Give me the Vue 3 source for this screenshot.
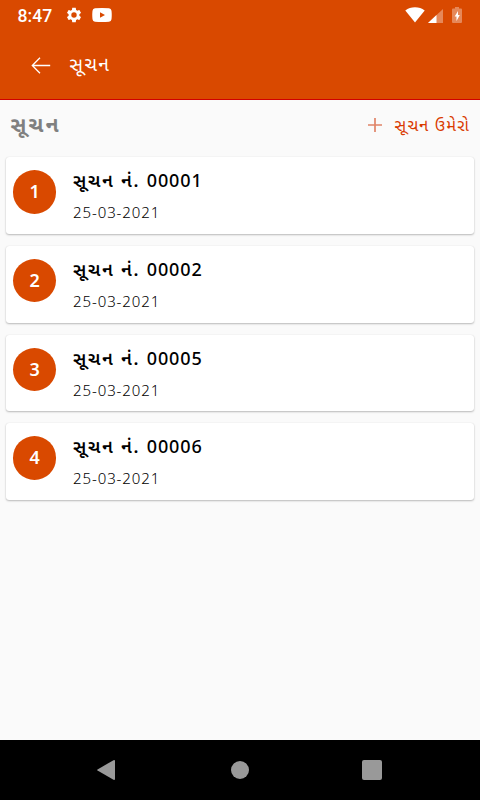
<script setup>
import { ref } from 'vue'

const title = 'સૂચન'
const suggestions = ref([
  { number: '00001', date: '25-03-2021' },
  { number: '00002', date: '25-03-2021' },
  { number: '00005', date: '25-03-2021' },
  { number: '00006', date: '25-03-2021' },
])
</script>

<template>
<div class="screen">
  <header class="header">
    <div class="status">
      <span class="clock">8:47</span>
      <svg class="gear" width="18" height="18" viewBox="0 0 24 24">
        <path fill="#fff" d="M19.14 12.94c.04-.3.06-.61.06-.94s-.02-.64-.07-.94l2.03-1.58c.18-.14.23-.41.12-.61l-1.92-3.32c-.12-.22-.37-.29-.59-.22l-2.39.96c-.5-.38-1.03-.7-1.62-.94L14.4 2.81c-.04-.24-.24-.41-.48-.41h-3.84c-.24 0-.43.17-.47.41l-.36 2.54c-.59.24-1.13.57-1.62.94l-2.39-.96c-.22-.08-.47 0-.59.22L2.74 8.87c-.12.21-.08.47.12.61l2.03 1.58c-.05.3-.09.63-.09.94s.02.64.07.94l-2.03 1.58c-.18.14-.23.41-.12.61l1.92 3.32c.12.22.37.29.59.22l2.39-.96c.5.38 1.03.7 1.62.94l.36 2.54c.05.24.24.41.48.41h3.84c.24 0 .44-.17.47-.41l.36-2.54c.59-.24 1.13-.56 1.62-.94l2.39.96c.22.08.47 0 .59-.22l1.92-3.32c.12-.22.07-.47-.12-.61l-2.01-1.58zM12 15.6A3.6 3.6 0 1 1 12 8.4a3.6 3.6 0 0 1 0 7.2z" />
      </svg>
      <svg class="video" width="20" height="14" viewBox="0 0 20 14">
        <path fill="#fff" fill-rule="evenodd" d="M3 .3Q10-.3 17 .3Q19.2.5 19.5 2.8Q20 7 19.5 11.2Q19.2 13.5 17 13.7Q10 14.3 3 13.7Q.8 13.5.5 11.2Q0 7 .5 2.8Q.8.5 3 .3ZM8 4.2V9.8L13 7Z" />
      </svg>
      <svg class="wifi" width="20" height="16" viewBox="0 0 20 16">
        <path fill="#fff" d="M10 15.6L.3 3.4Q4.500 .3 10 .3T19.700 3.400Z" />
      </svg>
      <svg class="signal" width="15" height="14" viewBox="0 0 15 14">
        <path fill="#fff" fill-opacity=".35" d="M15 0V14H0Z" />
        <path fill="#fff" d="M8.500 6V14H0Z" />
      </svg>
      <svg class="battery" width="10" height="16" viewBox="0 0 10 16">
        <path fill="#fff" fill-opacity=".35" d="M3 0H7V1.500H9Q10 1.500 10 2.500V15Q10 16 9 16H1Q0 16 0 15V2.500Q0 1.500 1 1.500H3Z" />
        <path fill="#fff" d="M6 4L2.700 9.500H4.500V14L7.800 8H6Z" />
      </svg>
    </div>
    <div class="toolbar">
      <svg width="20" height="17" viewBox="0 0 20 17">
        <path fill="none" stroke="#fff" stroke-width="1.300" d="M19.200 8.500H1.500M9 .8L1.300 8.500L9 16.200" />
      </svg>
      <span class="toolbar-title">{{ title }}</span>
    </div>
  </header>

  <main class="content">
    <div class="heading">
      <span class="heading-title">{{ title }}</span>
      <div class="add">
        <svg width="14" height="14" viewBox="0 0 14 14">
          <path stroke="#e08468" stroke-width="1.700" d="M7 0V14M0 7H14" />
        </svg>
        <span class="add-label">સૂચન ઉમેરો</span>
      </div>
    </div>
    <div class="list">
      <div class="card" v-for="(item,index) in suggestions" :key="item.number">
        <div class="badge">{{ index + 1 }}</div>
        <div class="card-text">
          <div class="card-title"><span class="card-label">સૂચન નં. </span>{{ item.number }}</div>
          <div class="card-date">{{ item.date }}</div>
        </div>
      </div>
    </div>
  </main>

  <nav class="navbar">
    <svg width="18" height="20" viewBox="0 0 18 20">
      <path fill="#999" d="M.5 9.400L16.500 .2Q18 -.2 18 1V19Q18 20.200 16.500 19.800L.5 10.600Q-.2 10 .5 9.400Z" />
    </svg>
    <div class="home"></div>
    <div class="recent"></div>
  </nav>
</div>
</template>

<style>
body{
  margin: 0;
}
</style>

<style scoped>
.screen{
  width: 480px;
  height: 800px;
  display: flex;
  flex-direction: column;
  overflow: hidden;
  background: #fafafa;
  font-family: "Noto Sans", "Noto Sans Gujarati", sans-serif;
}
.header{
  height: 100px;
  box-sizing: border-box;
  background: #d94900;
  border-bottom: 1px solid #d10000;
  color: #fff;
}
.status{
  display: flex;
  align-items: center;
  height: 30px;
  padding: 0 18px 0 17.500px;
}
.clock{
  width: 47.500px;
  font-family: Roboto, sans-serif;
  font-size: 17.600px;
  font-weight: 500;
  line-height: 30px;
  padding-top: 1px;
}
.video{
  margin-left: 9px;
}
.wifi{
  margin-left: auto;
}
.signal{
  margin: 2px 9px 0 3px;
}
.toolbar{
  display: flex;
  align-items: center;
  height: 70px;
  padding-left: 31px;
}
.toolbar-title{
  margin-left: 18.500px;
  font-size: 19px;
  letter-spacing: 1.500px;
}
.content{
  flex: 1;
}
.heading{
  display: flex;
  align-items: center;
  justify-content: space-between;
  height: 50px;
  padding: 0 10px 0 10.500px;
}
.heading-title{
  padding-top: 1px;
  color: #808080;
  font-size: 21px;
  font-weight: bold;
  letter-spacing: 2.200px;
}
.add{
  display: flex;
  align-items: center;
  color: #d93a00;
}
.add-label{
  margin-left: 13px;
  font-size: 16.500px;
  letter-spacing: 1.100px;
}
.list{
  display: flex;
  flex-direction: column;
  gap: 12px;
  padding: 7px 6px 0;
}
.card{
  display: flex;
  height: 76.800px;
  box-sizing: border-box;
  padding: 13px 6.500px;
  border-radius: 3px;
  background: #fff;
  box-shadow: 0 1px 2px rgba(0,0,0,.25), 0 0 1px rgba(0,0,0,.12);
}
.badge{
  width: 43.500px;
  height: 43.500px;
  box-sizing: border-box;
  padding-left: 1px;
  border-radius: 50%;
  background: #d94900;
  color: #fff;
  font-size: 18px;
  font-weight: 600;
  line-height: 42px;
  text-align: center;
}
.card-text{
  margin-left: 17px;
  color: #000;
  white-space: nowrap;
}
.card-title{
  height: 20px;
  font-size: 18px;
  font-weight: 500;
  line-height: 20px;
  letter-spacing: .900px;
}
.card-label{
  font-weight: 600;
  letter-spacing: 1.800px;
}
.card-date{
  height: 20px;
  margin-top: 12px;
  color: #000;
  font-size: 15px;
  font-weight: 350;
  line-height: 20px;
  letter-spacing: .900px;
}
.navbar{
  display: flex;
  align-items: center;
  justify-content: space-between;
  height: 60px;
  box-sizing: border-box;
  padding: 0 98px 0 97px;
  background: #000;
}
.home{
  width: 18px;
  height: 18px;
  margin-left: 2px;
  border-radius: 50%;
  background: #999;
}
.recent{
  width: 20px;
  height: 20px;
  border-radius: 2px;
  background: #999;
}
</style>
